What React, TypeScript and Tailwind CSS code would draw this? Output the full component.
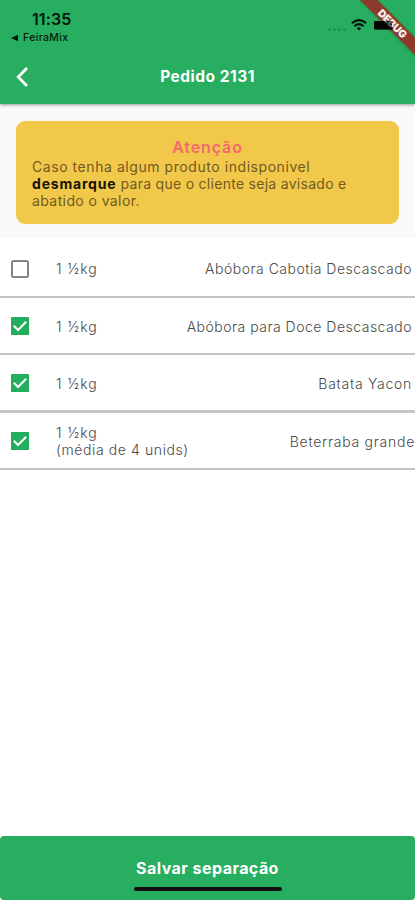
import { clsx } from "clsx";

const items = [
  {
    checked: false,
    amount: "1 ½kg",
    name: "Abóbora Cabotia Descascado",
    row: "h-[60px] border-b-2 pt-[3px] pr-[3px]",
    qty: "pt-0",
    text: "tracking-[0.5px]",
  },
  {
    checked: true,
    amount: "1 ½kg",
    name: "Abóbora para Doce Descascado",
    row: "h-[57px] border-b-2 pr-[3px]",
    qty: "pt-[2px]",
    text: "pt-[2px] tracking-[0.5px]",
  },
  {
    checked: true,
    amount: "1 ½kg",
    name: "Batata Yacon",
    row: "h-[58px] border-b-[3px] pr-[3px]",
    qty: "pt-[2px]",
    text: "pt-[2px] tracking-[0.72px]",
  },
  {
    checked: true,
    amount: "1 ½kg",
    note: "(média de 4 unids)",
    name: "Beterraba grande",
    row: "h-[57px] border-b-2 pr-0",
    qty: "pt-0",
    text: "pt-[2px] tracking-[0.74px]",
  },
];

function Checkbox({ checked }: { checked: boolean }) {
  return (
    <svg width="18" height="18" viewBox="0 0 18 18" className="shrink-0">
      {checked ? (
        <>
          <rect width="18" height="18" rx="0.5" fill="#23ad5d" />
          <path d="M2.8 8.8 7 13 15.2 4.8" fill="none" stroke="#fff" strokeWidth="2" />
        </>
      ) : (
        <rect
          x="1"
          y="1"
          width="16"
          height="16"
          rx="1.5"
          fill="none"
          stroke="#858585"
          strokeWidth="2"
        />
      )}
    </svg>
  );
}

function DebugRibbon() {
  return (
    <svg
      width="65"
      height="65"
      viewBox="350 0 65 65"
      className="absolute top-0 right-0"
    >
      <path d="M358 0H379L415 36V58Z" fill="#1d8047" opacity="0.35" />
      <path d="M360 0H377.5L415 37.5V55Z" fill="#8d3a2b" />
      <rect x="374" y="21" width="19" height="8.5" rx="1" fill="#050505" />
      <text
        x="392.5"
        y="27.6"
        textAnchor="middle"
        transform="rotate(45 392.5 23.8)"
        fill="#f7f1ef"
        fontFamily="Inter"
        fontWeight="900"
        fontSize="10.5"
        textLength="36"
      >
        DEBUG
      </text>
      <rect x="378" y="21" width="14" height="8.5" fill="#050505" opacity="0.6" />
    </svg>
  );
}

function Header() {
  return (
    <header className="relative z-10 h-[104px] bg-[#28ae60] shadow-[0_1px_3px_rgba(0,0,0,0.4)]">
      <div className="flex h-[48px] justify-between">
        <div className="pt-[9px] text-[#06160c]">
          <div className="pl-[32px] text-[16px] leading-[20px] font-semibold tracking-[0.1px]">
            11:35
          </div>
          <div className="flex items-center pt-[2px] pl-[11px] text-[10.5px] leading-[14px] font-medium tracking-[0.35px]">
            <svg width="8" height="8" viewBox="0 0 8 8" className="mr-[4px]">
              <path d="M0 4 7 .8V7.2Z" fill="currentColor" />
            </svg>
            FeiraMix
          </div>
        </div>
        <div className="flex pr-[48px]">
          <div className="mt-[28px] mr-[5px] flex h-[3px] gap-[2px] opacity-40">
            {[0, 1, 2, 3].map((i) => (
              <span key={i} className="h-[3px] w-[3px] rounded-full bg-[#17613a]" />
            ))}
          </div>
          <svg
            width="16"
            height="12"
            viewBox="0 0 16 12"
            className="mt-[19px]"
            fill="none"
            stroke="#05130a"
            strokeWidth="2.1"
          >
            <path d="M.8 4.2Q8-2 15.2 4.2" />
            <path d="M3.4 7.2Q8 3.2 12.6 7.2" />
            <path d="M5.8 9.2Q8 7.2 10.2 9.2L8 11.6Z" fill="#05130a" stroke="none" />
          </svg>
        </div>
      </div>
      <div className="relative flex h-[56px] items-center justify-center pt-[2px]">
        <svg
          width="13"
          height="20"
          viewBox="0 0 13 20"
          className="absolute top-[19px] left-[16px]"
        >
          <path d="M11 1 2.2 10 11 19" fill="none" stroke="#fff" strokeWidth="2.8" />
        </svg>
        <h1 className="text-[15.5px] leading-[20px] font-bold tracking-[0.5px] whitespace-nowrap text-white">
          Pedido 2131
        </h1>
      </div>
      <DebugRibbon />
    </header>
  );
}

export default function App() {
  return (
    <div className="flex h-[900px] w-[415px] flex-col overflow-hidden bg-white font-['Inter',sans-serif]">
      <Header />
      <section className="h-[134px] bg-[#fafafa] px-[16px] pt-[17px]">
        <div className="h-[103px] rounded-[9px] bg-[#f2c84b] px-[16px] pt-[16px] text-[14px] leading-[17px] whitespace-nowrap text-[#705a20]">
          <h2 className="pb-[1px] text-center text-[16px] leading-[20px] font-semibold tracking-[0.9px] text-[#f5696c]">
            Atenção
          </h2>
          <p className="tracking-[0.56px]">Caso tenha algum produto indisponivel</p>
          <p className="tracking-[0.28px]">
            <b className="tracking-[0.8px] text-[#161204]">desmarque</b> para que o
            cliente seja avisado e
          </p>
          <p className="tracking-[0.4px]">abatido o valor.</p>
        </div>
      </section>
      <ul className="text-[14px] leading-[17px] font-light text-[#484848]">
        {items.map((item) => (
          <li
            key={item.name}
            className={clsx(
              "flex items-center justify-between border-[#c4c5c4] pl-[11px] whitespace-nowrap",
              item.row,
            )}
          >
            <div className="flex items-center">
              <Checkbox checked={item.checked} />
              <div className={clsx("pl-[27px]", item.qty)}>
                <div className="tracking-[1.1px]">{item.amount}</div>
                {item.note && <div className="tracking-[0.6px]">{item.note}</div>}
              </div>
            </div>
            <span className={item.text}>{item.name}</span>
          </li>
        ))}
      </ul>
      <button className="mt-auto flex h-[64px] flex-col items-center rounded-[4px] bg-[#28ae60] pt-[22px]">
        <span className="text-[16px] leading-[20px] font-bold tracking-[0.45px] whitespace-nowrap text-white">
          Salvar separação
        </span>
        <span className="mt-[9px] h-[4px] w-[148px] rounded-full bg-[#101010]" />
      </button>
    </div>
  );
}
